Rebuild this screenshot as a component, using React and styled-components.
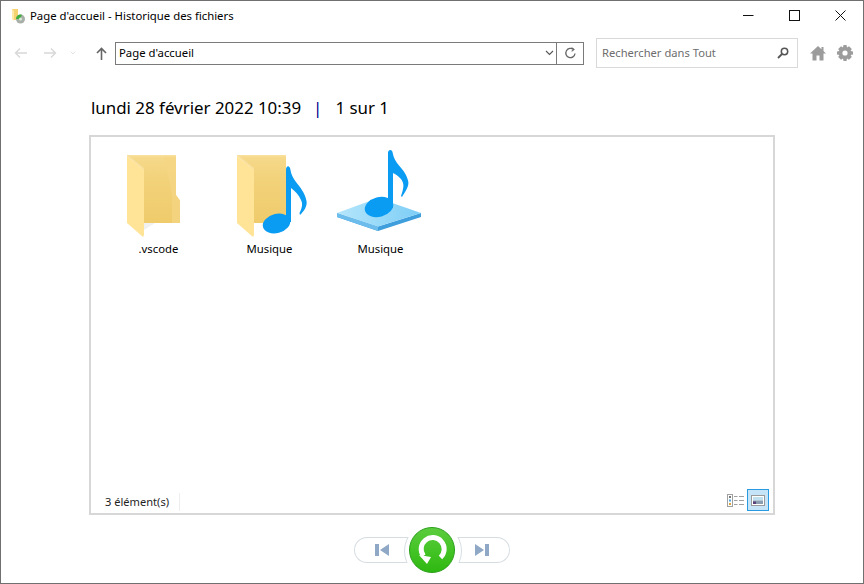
import React from 'react'
import styled, { createGlobalStyle } from 'styled-components'

const GlobalStyle = createGlobalStyle`
  html, body {
    margin: 0;
    padding: 0;
    background: #fff;
  }
  * {
    box-sizing: border-box;
  }
`

const Win = styled.div`
  width: 864px;
  height: 584px;
  background: #fff;
  border: 1px solid #707070;
  display: flex;
  flex-direction: column;
  font-family: "Noto Sans", "Open Sans", sans-serif;
  color: #000;
  overflow: hidden;
`

const TitleBar = styled.div`
  height: 29px;
  display: flex;
  align-items: center;
  padding-left: 10px;
  flex-shrink: 0;
`

const TitleText = styled.span`
  font-size: 11.33px;
  margin-left: 4px;
  flex: 1;
`

const WinBtn = styled.div`
  width: 46px;
  height: 29px;
  display: flex;
  align-items: center;
  justify-content: center;
`

const Toolbar = styled.div`
  height: 32px;
  margin-top: 7px;
  display: flex;
  align-items: center;
  padding-left: 12px;
  flex-shrink: 0;
`

const NavIcon = styled.div`
  width: ${p => p.$w}px;
  margin-left: ${p => p.$ml || 0}px;
  display: flex;
  justify-content: center;
`

const Address = styled.div`
  width: 469px;
  height: 23px;
  margin-left: 3px;
  border: 1px solid #7a7a7a;
  display: flex;
  align-items: center;
  font-size: 11.33px;
`

const AddressText = styled.span`
  flex: 1;
  padding: 0 0 1px 3px;
`

const AddressDrop = styled.div`
  width: 14px;
  display: flex;
  justify-content: center;
`

const Refresh = styled.div`
  width: 27px;
  height: 21px;
  border-left: 1px solid #7a7a7a;
  display: flex;
  align-items: center;
  justify-content: center;
`

const Search = styled.div`
  width: 202px;
  height: 30px;
  margin-left: 12px;
  border: 1px solid #d9d9d9;
  display: flex;
  align-items: center;
  padding: 0 8px 0 5px;
  font-size: 11.2px;
  color: #6d6d6d;
`

const SearchText = styled.span`
  flex: 1;
  padding-bottom: 1px;
`

const ToolIcons = styled.div`
  display: flex;
  align-items: center;
  gap: 11px;
  margin-left: 12px;
`

const DateLine = styled.div`
  margin: 27px 0 0 90px;
  height: 24px;
  font-size: 16.9px;
  line-height: 24px;
  display: flex;
  flex-shrink: 0;
`

const DateSep = styled.span`
  color: #00008b;
  margin: 0 13px 0 12px;
`

const Panel = styled.div`
  width: 686px;
  height: 380px;
  margin: 15px 0 0 88px;
  border: 2px solid #d7d7d7;
  display: flex;
  flex-direction: column;
  flex-shrink: 0;
`

const Items = styled.div`
  flex: 1;
  display: flex;
  padding: 11px 0 0 12px;
  align-items: flex-start;
`

const Item = styled.div`
  width: 111px;
  height: 109px;
  display: flex;
  flex-direction: column;
  align-items: center;
  justify-content: flex-end;
  font-size: 11.33px;
  line-height: 16px;
`

const ItemIcon = styled.div`
  margin: 0 ${p => (p.$dx < 0 ? -p.$dx * 2 : 0)}px 4px ${p => (p.$dx > 0 ? p.$dx * 2 : 0)}px;
  display: flex;
`

const StatusBar = styled.div`
  height: 24px;
  margin-bottom: 1px;
  display: flex;
  align-items: center;
  padding: 0 4px 0 14px;
  font-size: 11.1px;
  color: #1f1f1f;
`

const StatusText = styled.span`
  margin-top: 4px;
  padding-right: 10px;
  border-right: 1px solid #eeeeee;
  line-height: 18px;
`

const Views = styled.div`
  margin-left: auto;
  display: flex;
  align-items: center;
  gap: 1px;
`

const ViewBtn = styled.div`
  width: ${p => (p.$active ? 22 : 20)}px;
  height: 22px;
  display: flex;
  align-items: center;
  justify-content: center;
  background: ${p => (p.$active ? '#c6e4f7' : 'transparent')};
  border: ${p => (p.$active ? '1px solid #2a9ae0' : 'none')};
`

const Nav = styled.div`
  margin-top: 11px;
  height: 48px;
  display: flex;
  justify-content: center;
  align-items: center;
`

const Pill = styled.div`
  position: relative;
  width: 64px;
  height: 26px;
  overflow: hidden;
  box-shadow: inset 0 0 0 1px #d6dde1;
  border-radius: ${p => (p.$right ? '0 13px 13px 0' : '13px 0 0 13px')};
  display: flex;
  align-items: center;
  padding-left: ${p => (p.$right ? 29 : 21)}px;

  &::after {
    content: '';
    position: absolute;
    top: -15px;
    left: ${p => (p.$right ? -42 : 50)}px;
    width: 56px;
    height: 56px;
    border-radius: 50%;
    background: #fff;
    border: 1px solid #d6dde1;
  }
`

const RestoreBtn = styled.div`
  width: 46px;
  height: 46px;
  margin: 0 -9px;
  position: relative;
  z-index: 1;
  flex-shrink: 0;
  display: flex;
`

const FolderIcon = () => (
  <svg width="55" height="82" viewBox="126 155 55 82">
    <defs>
      <linearGradient id="folderBack" x1="0" y1="0" x2="0" y2="1">
        <stop offset="0" stopColor="#f6da8c" />
        <stop offset="0.35" stopColor="#f2d27a" />
        <stop offset="1" stopColor="#efcb6b" />
      </linearGradient>
    </defs>
    <path d="M143 230L154 223H143Z" fill="#f1f1f1" />
    <path d="M126 155H175V195L179 200.5V223H143V170Z" fill="url(#folderBack)" />
    <path d="M163 156H175V195L179 200.5V223H171V195Z" fill="#f5d684" opacity="0.7" />
    <path d="M126 156L143 170V235L142 237L126 223Z" fill="#ffe498" />
    <path d="M126 155H175V156.5H129L143 168V170L126 156Z" fill="#f9df9c" />
  </svg>
)

const MusicFolderIcon = () => (
  <svg width="71" height="82" viewBox="237 155 71 82">
    <path d="M237 155H286V223H254V170Z" fill="url(#folderBack)" />
    <path d="M237 156L254 170V235L253 237L237 223Z" fill="#ffe498" />
    <path d="M237 155H286V156.5H240L254 168V170L237 156Z" fill="#f9df9c" />
    <path d="M286 170C286 165 290 165 290.5 170C291 174 293 178 296 182C300 187 305 193 306.5 201C307.5 206 304 211 300 215L299.5 213C302 208 303 204 301 200C299 195 295 191 291 188V222H286Z" fill="#0a9bf3" />
    <ellipse cx="276.5" cy="223.5" rx="14" ry="9.5" transform="rotate(-15 276.5 223.5)" fill="#0a9bf3" />
  </svg>
)

const MusicLibIcon = () => (
  <svg width="85" height="87" viewBox="337 150 85 87">
    <defs>
      <linearGradient id="plateTop" x1="0" y1="0" x2="1" y2="0">
        <stop offset="0" stopColor="#b5e6fb" />
        <stop offset="1" stopColor="#7ccdf6" />
      </linearGradient>
    </defs>
    <path d="M337 213L378 226.5L421 213V217L378 231L337 217Z" fill="#3f9fdd" />
    <path d="M337 213L378 226.5V231L337 217Z" fill="#6cbdec" />
    <path d="M337 213L378 198L421 213L378 226.5Z" fill="url(#plateTop)" />
    <path d="M388 153C388 149 392.5 149 392.7 153C393.5 158 396 162 399 165.5C403 170 407 175 408.3 181.7C409 187 405 192 402 197L401 196C403 190 404 186 403 183C402 179 398 175.5 393 173V208H388Z" fill="#0a9bf3" />
    <ellipse cx="379" cy="207" rx="14.5" ry="9.8" transform="rotate(-15 379 207)" fill="#0a9bf3" />
  </svg>
)

const ArrowLeft = ({ color = '#d8d8d8' }) => (
  <svg width="14" height="12" viewBox="0 0 14 12" fill="none" stroke={color} strokeWidth="1.4">
    <path d="M13 6H2M6 1.5L1.5 6L6 10.5" />
  </svg>
)

const ArrowRight = ({ color = '#d8d8d8' }) => (
  <svg width="14" height="12" viewBox="0 0 14 12" fill="none" stroke={color} strokeWidth="1.4">
    <path d="M1 6H12M8 1.5L12.5 6L8 10.5" />
  </svg>
)

const Chevron = ({ color = '#555', w = 9 }) => (
  <svg width={w} height="6" viewBox="0 0 9 6" fill="none" stroke={color} strokeWidth="1.1">
    <path d="M1 1L4.5 4.5L8 1" />
  </svg>
)

const App = () => (
  <Win>
    <GlobalStyle />
    <TitleBar>
      <svg width="15" height="16" viewBox="0 0 15 16">
        <path d="M1 1H7V12H3L1 10Z" fill="#f5d272" />
        <path d="M1 1L3 3V13L1 11Z" fill="#ffe9a8" />
        <circle cx="9.5" cy="11" r="4.5" fill="#a8aea8" />
        <path d="M5 11A4.5 4.5 0 0 1 11 6.8L9 11Z" fill="#3fae3c" />
        <circle cx="9.5" cy="11" r="1.6" fill="#d8e8d8" />
      </svg>
      <TitleText>Page d'accueil - Historique des fichiers</TitleText>
      <WinBtn>
        <svg width="11" height="11" viewBox="0 0 11 11"><path d="M0 5.5H10.5" stroke="#111" strokeWidth="1" /></svg>
      </WinBtn>
      <WinBtn>
        <svg width="11" height="11" viewBox="0 0 11 11"><rect x="0.5" y="0.5" width="10" height="10" fill="none" stroke="#111" /></svg>
      </WinBtn>
      <WinBtn>
        <svg width="11" height="11" viewBox="0 0 11 11"><path d="M0.5 0.5L10.5 10.5M10.5 0.5L0.5 10.5" stroke="#111" strokeWidth="1" /></svg>
      </WinBtn>
    </TitleBar>

    <Toolbar>
      <NavIcon $w={16}><ArrowLeft /></NavIcon>
      <NavIcon $w={41}><ArrowRight /></NavIcon>
      <NavIcon $w={6}><Chevron color="#d8d8d8" w={6} /></NavIcon>
      <NavIcon $w={22} $ml={14}>
        <svg width="11" height="13" viewBox="0 0 11 13" fill="none" stroke="#666" strokeWidth="1.6">
          <path d="M5.5 13V2M1 6L5.5 1.5L10 6" />
        </svg>
      </NavIcon>
      <Address>
        <AddressText>Page d'accueil</AddressText>
        <AddressDrop><Chevron /></AddressDrop>
        <Refresh>
          <svg width="13" height="13" viewBox="0 0 13 13" fill="none" stroke="#666" strokeWidth="1.3">
            <path d="M9.5 2.6A4.6 4.6 0 1 0 11 6.5" />
            <path d="M7.6 0.6L10 2.6L7.6 4.4" strokeWidth="1.1" />
          </svg>
        </Refresh>
      </Address>
      <Search>
        <SearchText>Rechercher dans Tout</SearchText>
        <svg width="12" height="12" viewBox="0 0 12 12" fill="none" stroke="#555">
          <circle cx="7.5" cy="4.5" r="3.2" strokeWidth="1.5" />
          <path d="M5 7L1 11" strokeWidth="1.8" />
        </svg>
      </Search>
      <ToolIcons>
        <svg width="16" height="16" viewBox="0 0 16 16" fill="#9c9c9c">
          <path d="M8 1L0 8.5H2.5V15.5H6.5V10.5H9.5V15.5H13.5V8.5H16L13.5 6V2H11.5V4.2Z" />
        </svg>
        <svg width="16" height="16" viewBox="0 0 16 16">
          <path d="M6.5 0H9.5L10 2.4L12 1.2L14.8 4L13.6 6L16 6.5V9.5L13.6 10L14.8 12L12 14.8L10 13.6L9.5 16H6.5L6 13.6L4 14.8L1.2 12L2.4 10L0 9.5V6.5L2.4 6L1.2 4L4 1.2L6 2.4Z" fill="#9c9c9c" />
          <circle cx="8" cy="8" r="2.6" fill="#fff" />
        </svg>
      </ToolIcons>
    </Toolbar>

    <DateLine>
      lundi 28 février 2022 10:39
      <DateSep>|</DateSep>
      1 sur 1
    </DateLine>

    <Panel>
      <Items>
        <Item>
          <ItemIcon $dx={-4.5}><FolderIcon /></ItemIcon>
          .vscode
        </Item>
        <Item>
          <ItemIcon $dx={3}><MusicFolderIcon /></ItemIcon>
          Musique
        </Item>
        <Item>
          <ItemIcon $dx={-1}><MusicLibIcon /></ItemIcon>
          Musique
        </Item>
      </Items>
      <StatusBar>
        <StatusText>3 élément(s)</StatusText>
        <Views>
          <ViewBtn>
            <svg width="18" height="13" viewBox="0 0 18 13" fill="none">
              <rect x="0.5" y="0.5" width="5" height="12" stroke="#a0a0a0" />
              <rect x="2" y="2" width="2" height="2" fill="#777" />
              <rect x="2" y="5.5" width="2" height="2" fill="#4aa8e0" />
              <rect x="2" y="9" width="2" height="2" fill="#d9a437" />
              <path d="M7 2.5H10.5M12 2.5H17M7 6.5H10.5M12 6.5H17M7 10.5H10.5M12 10.5H17" stroke="#a0a0a0" />
            </svg>
          </ViewBtn>
          <ViewBtn $active>
            <svg width="14" height="11" viewBox="0 0 14 11">
              <rect x="0.5" y="0.5" width="13" height="10" fill="#fff" stroke="#9a9a9a" />
              <rect x="2" y="2" width="10" height="3.5" fill="#bfe0ee" />
              <rect x="2" y="5.5" width="10" height="3.5" fill="#8a9db0" />
              <rect x="2" y="6.5" width="3" height="2.5" fill="#5a3f78" />
            </svg>
          </ViewBtn>
        </Views>
      </StatusBar>
    </Panel>

    <Nav>
      <Pill>
        <svg width="14" height="12" viewBox="0 0 14 12" fill="#8ea8c6">
          <rect x="0" y="0" width="4" height="12" />
          <path d="M14 0V12L5 6Z" />
        </svg>
      </Pill>
      <RestoreBtn>
        <svg width="46" height="46" viewBox="0 0 46 46">
          <defs>
            <linearGradient id="greenBall" x1="0" y1="0" x2="0" y2="1">
              <stop offset="0" stopColor="#5ccc3e" />
              <stop offset="0.55" stopColor="#42c324" />
              <stop offset="1" stopColor="#2eb711" />
            </linearGradient>
          </defs>
          <circle cx="23" cy="23" r="22.5" fill="url(#greenBall)" stroke="#2a9f1a" />
          <path d="M31.5 30.5A11.5 11.5 0 1 0 14.5 29" fill="none" stroke="#fff" strokeWidth="5" />
          <path d="M10 28L22 30L18 37Z" fill="#fff" />
        </svg>
      </RestoreBtn>
      <Pill $right>
        <svg width="14" height="12" viewBox="0 0 14 12" fill="#8ea8c6">
          <path d="M0 0V12L9 6Z" />
          <rect x="10" y="0" width="4" height="12" />
        </svg>
      </Pill>
    </Nav>
  </Win>
)

export default App
